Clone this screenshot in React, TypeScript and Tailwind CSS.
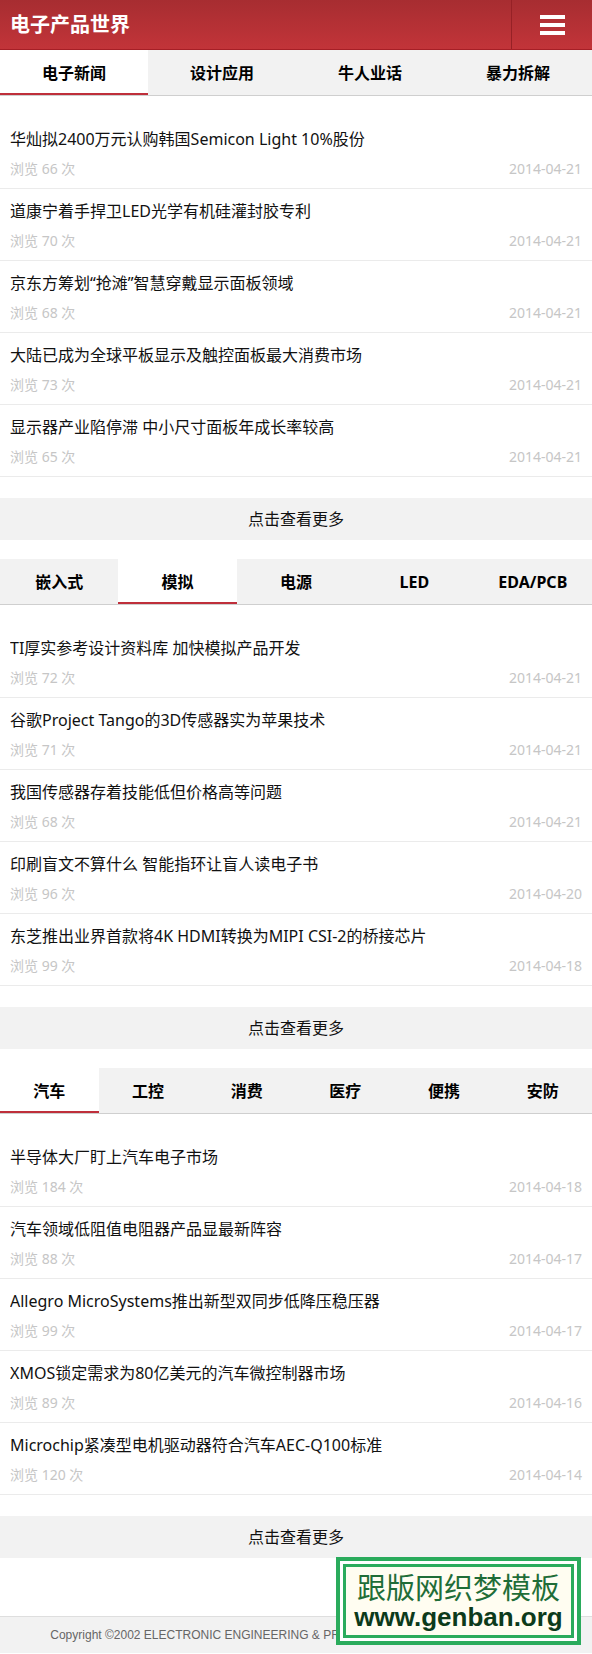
import { useState } from "react";

interface NewsItem {
  title: string;
  views: number;
  date: string;
}

interface Section {
  tabs: string[];
  active: number;
  items: NewsItem[];
}

const sections: Section[] = [
  {
    tabs: ["电子新闻", "设计应用", "牛人业话", "暴力拆解"],
    active: 0,
    items: [
      { title: "华灿拟2400万元认购韩国Semicon Light 10%股份", views: 66, date: "2014-04-21" },
      { title: "道康宁着手捍卫LED光学有机硅灌封胶专利", views: 70, date: "2014-04-21" },
      { title: "京东方筹划“抢滩”智慧穿戴显示面板领域", views: 68, date: "2014-04-21" },
      { title: "大陆已成为全球平板显示及触控面板最大消费市场", views: 73, date: "2014-04-21" },
      { title: "显示器产业陷停滞 中小尺寸面板年成长率较高", views: 65, date: "2014-04-21" },
    ],
  },
  {
    tabs: ["嵌入式", "模拟", "电源", "LED", "EDA/PCB"],
    active: 1,
    items: [
      { title: "TI厚实参考设计资料库 加快模拟产品开发", views: 72, date: "2014-04-21" },
      { title: "谷歌Project Tango的3D传感器实为苹果技术", views: 71, date: "2014-04-21" },
      { title: "我国传感器存着技能低但价格高等问题", views: 68, date: "2014-04-21" },
      { title: "印刷盲文不算什么 智能指环让盲人读电子书", views: 96, date: "2014-04-20" },
      { title: "东芝推出业界首款将4K HDMI转换为MIPI CSI-2的桥接芯片", views: 99, date: "2014-04-18" },
    ],
  },
  {
    tabs: ["汽车", "工控", "消费", "医疗", "便携", "安防"],
    active: 0,
    items: [
      { title: "半导体大厂盯上汽车电子市场", views: 184, date: "2014-04-18" },
      { title: "汽车领域低阻值电阻器产品显最新阵容", views: 88, date: "2014-04-17" },
      { title: "Allegro MicroSystems推出新型双同步低降压稳压器", views: 99, date: "2014-04-17" },
      { title: "XMOS锁定需求为80亿美元的汽车微控制器市场", views: 89, date: "2014-04-16" },
      { title: "Microchip紧凑型电机驱动器符合汽车AEC-Q100标准", views: 120, date: "2014-04-14" },
    ],
  },
];

function NewsSection({ section }: { section: Section }) {
  const [active, setActive] = useState(section.active);

  return (
    <section>
      <div className="flex border-b border-[#cfcfcf] bg-[#f2f2f2]">
        {section.tabs.map((tab, i) => (
          <button
            key={tab}
            onClick={() => setActive(i)}
            className={
              i === active
                ? "flex-1 h-[45px] bg-white border-b-2 border-[#bf2f3b] pt-[2px] text-[16px] font-bold text-black"
                : "flex-1 h-[45px] text-[16px] font-bold text-black"
            }
          >
            {tab}
          </button>
        ))}
      </div>

      <ul className="mt-[21px]">
        {section.items.map((item) => (
          <li key={item.title} className="border-b border-[#ebebeb] px-[10px] pt-[10px] pb-[9px]">
            <a href="#" className="block text-[16px] leading-6 text-[#111] truncate">
              {item.title}
            </a>
            <div className="mt-2 flex justify-between text-[14px] leading-5 text-[#c6c6c6]">
              <span>浏览 {item.views} 次</span>
              <span>{item.date}</span>
            </div>
          </li>
        ))}
      </ul>

      <a
        href="#"
        className="mt-[21px] mb-[19px] flex h-[42px] items-center justify-center bg-[#f2f2f2] text-[16px] text-[#111]"
      >
        点击查看更多
      </a>
    </section>
  );
}

export default function App() {
  return (
    <div className="relative min-h-[1654px] bg-white font-['Noto_Sans','Noto_Sans_CJK_SC',sans-serif]">
      <header className="flex h-[50px] items-stretch border-b border-[#a51f26] bg-gradient-to-b from-[#a72d31] to-[#c23439]">
        <h1 className="flex flex-1 items-center pl-[10px] text-[20px] font-bold text-white">电子产品世界</h1>
        <button className="flex w-[81px] items-center justify-center border-l border-[#962126]">
          <span className="flex flex-col gap-1">
            <span className="block h-1 w-[25px] bg-white" />
            <span className="block h-1 w-[25px] bg-white" />
            <span className="block h-1 w-[25px] bg-white" />
          </span>
        </button>
      </header>

      {sections.map((s, i) => (
        <NewsSection key={i} section={s} />
      ))}

      <footer className="mt-[58px] flex h-[37px] items-center justify-center border-t border-[#dedede] bg-[#f2f2f2] font-['Liberation_Sans',Arial,sans-serif] text-[12px] text-[#666]">
        Copyright ©2002 ELECTRONIC ENGINEERING &amp; PRODUCT WORLD. All Rights Reserved
      </footer>

      {/* site watermark */}
      <div className="absolute left-[336px] top-[1557px] h-[88px] w-[245px] border-4 border-[#2aab5c] bg-white p-[3px]">
        <div className="flex h-full flex-col items-center justify-center border-[3px] border-[#2aab5c] bg-[#fffdf1]">
          <div className="font-['Noto_Sans_CJK_SC',sans-serif] text-[29px] leading-[32px] text-[#1f6d38]">
            跟版网织梦模板
          </div>
          <div className="font-['Liberation_Sans',Arial,sans-serif] text-[26px] font-bold leading-[30px] text-[#0c3a1b]">
            www.genban.org
          </div>
        </div>
      </div>
    </div>
  );
}
